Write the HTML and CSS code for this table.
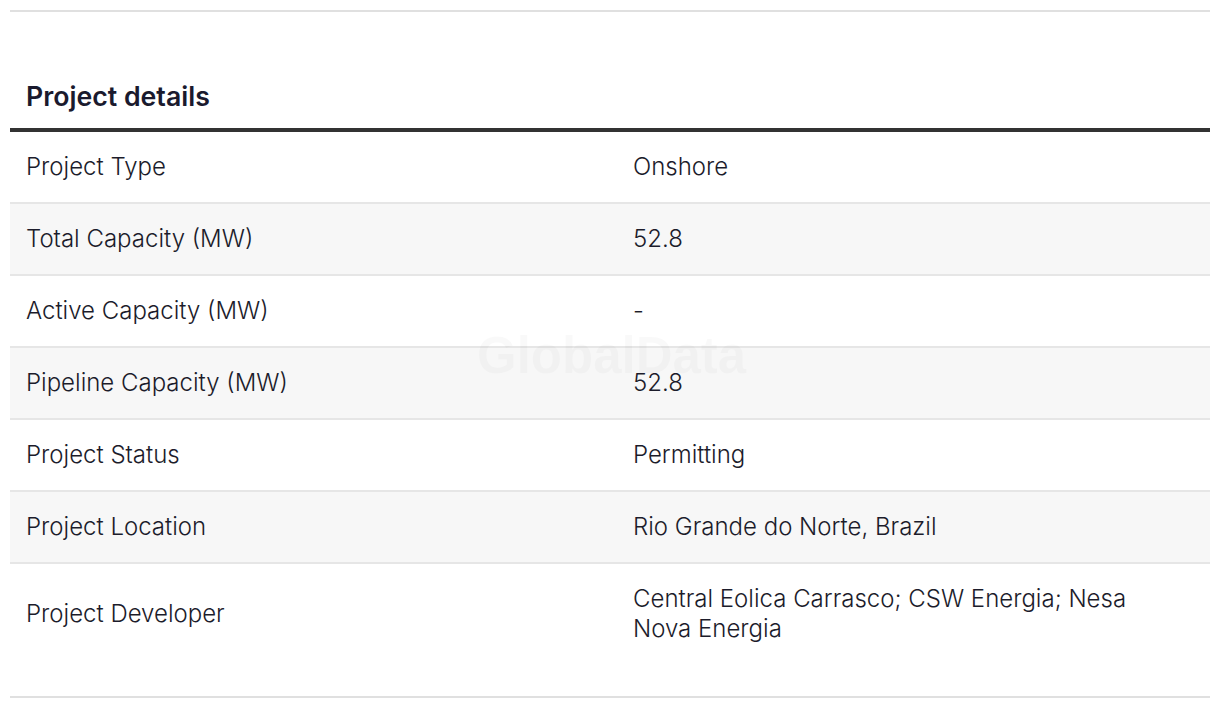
FILE: index.html
```html
<!DOCTYPE html>
<html>
<head>
<meta charset="utf-8">
<link rel="stylesheet" href="styles.css">
</head>
<body>
<section class="details">
  <h2 class="details-title">Project details</h2>
  <div class="table">
    <div class="row"><div class="cell label">Project Type</div><div class="cell value">Onshore</div></div>
    <div class="row alt"><div class="cell label">Total Capacity (MW)</div><div class="cell value">52.8</div></div>
    <div class="row"><div class="cell label">Active Capacity (MW)</div><div class="cell value">-</div></div>
    <div class="row alt"><div class="cell label">Pipeline Capacity (MW)</div><div class="cell value">52.8</div></div>
    <div class="row"><div class="cell label">Project Status</div><div class="cell value">Permitting</div></div>
    <div class="row alt"><div class="cell label">Project Location</div><div class="cell value">Rio Grande do Norte, Brazil</div></div>
    <div class="row last"><div class="cell label">Project Developer</div><div class="cell value">Central Eolica Carrasco; CSW Energia; Nesa Nova Energia</div></div>
    <div class="watermark">GlobalData</div>
  </div>
</section>
</body>
</html>
```

FILE: styles.css
```css
html, body {
  margin: 0;
  padding: 0;
  background: #ffffff;
}
body {
  font-family: Inter, Roboto, "Liberation Sans", sans-serif;
  color: #1c1c2b;
}
.details {
  margin: 10px 10px 0;
  border-top: 2px solid #e0e0e0;
  border-bottom: 2px solid #e0e0e0;
  padding-bottom: 32px;
}
.details-title {
  margin: 0;
  padding: 68px 16px 16px;
  font-size: 26.7px;
  line-height: 32px;
  font-weight: 600;
  color: #1a1a2e;
  border-bottom: 4px solid #333333;
}
.table {
  position: relative;
}
.row {
  display: grid;
  grid-template-columns: 607px 1fr;
  border-bottom: 2px solid #e6e6e6;
}
.row.alt {
  background: #f7f7f7;
}
.row.last {
  border-bottom: none;
}
.cell {
  padding: 20px 16px;
  font-size: 24px;
  line-height: 30px;
  font-weight: 300;
  align-self: center;
}
.value {
  padding-right: 40px;
}
.watermark {
  position: absolute;
  left: 467px;
  top: 194px;
  font-size: 51px;
  line-height: 60px;
  font-weight: 700;
  color: rgba(0, 0, 0, 0.025);
  font-family: "Liberation Sans", Arial, sans-serif;
  pointer-events: none;
}
```
